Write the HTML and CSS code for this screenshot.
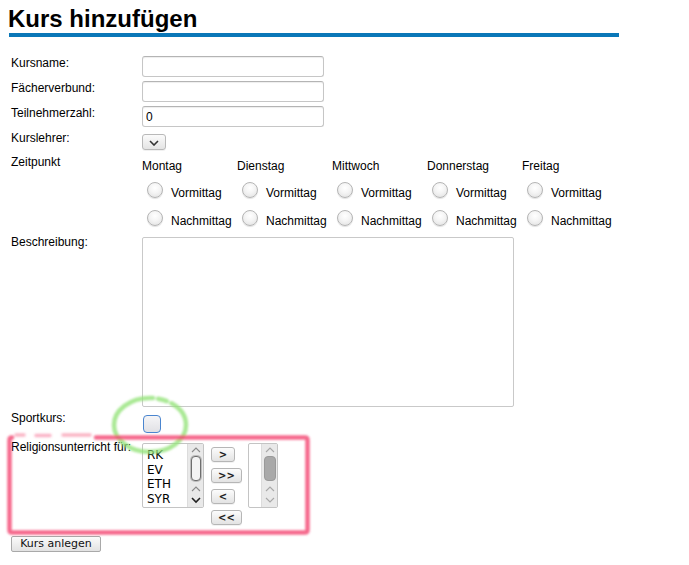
FILE: index.html
```html
<!DOCTYPE html>
<html lang="de">
<head>
<meta charset="utf-8">
<title>Kurs hinzufügen</title>
<link rel="stylesheet" href="styles.css">
</head>
<body>
<div class="page">
  <h1 class="title">Kurs hinzufügen</h1>
  <div class="form">
    <div class="row r-text"><label class="lbl">Kursname:</label><input class="txt" type="text"></div>
    <div class="row r-text"><label class="lbl">Fächerverbund:</label><input class="txt" type="text"></div>
    <div class="row r-text"><label class="lbl">Teilnehmerzahl:</label><input class="txt" type="text" value="0"></div>
    <div class="row r-sel"><label class="lbl">Kurslehrer:</label>
      <span class="sel"><svg width="10" height="6" viewBox="0 0 10 6"><polyline points="1,1 5,5 9,1" fill="none" stroke="#333" stroke-width="1.6"/></svg></span>
    </div>
    <div class="row r-time"><label class="lbl">Zeitpunkt</label>
      <div class="days">
        <span class="day">Montag</span><span class="day">Dienstag</span><span class="day">Mittwoch</span><span class="day">Donnerstag</span><span class="day">Freitag</span>
        <label class="opt"><input class="radio" type="radio" name="mo"><span class="opt-t">Vormittag</span></label>
        <label class="opt"><input class="radio" type="radio" name="di"><span class="opt-t">Vormittag</span></label>
        <label class="opt"><input class="radio" type="radio" name="mi"><span class="opt-t">Vormittag</span></label>
        <label class="opt"><input class="radio" type="radio" name="do"><span class="opt-t">Vormittag</span></label>
        <label class="opt"><input class="radio" type="radio" name="fr"><span class="opt-t">Vormittag</span></label>
        <label class="opt"><input class="radio" type="radio" name="mo"><span class="opt-t">Nachmittag</span></label>
        <label class="opt"><input class="radio" type="radio" name="di"><span class="opt-t">Nachmittag</span></label>
        <label class="opt"><input class="radio" type="radio" name="mi"><span class="opt-t">Nachmittag</span></label>
        <label class="opt"><input class="radio" type="radio" name="do"><span class="opt-t">Nachmittag</span></label>
        <label class="opt"><input class="radio" type="radio" name="fr"><span class="opt-t">Nachmittag</span></label>
      </div>
    </div>
    <div class="row r-desc"><label class="lbl">Beschreibung:</label><textarea class="area"></textarea></div>
    <div class="row r-sport"><label class="lbl">Sportkurs:</label><input class="check" type="checkbox"></div>
    <div class="row r-rel"><label class="lbl">Religionsunterricht für:</label>
      <div class="rel">
        <div class="list list-a">
          <div class="items"><div>RK</div><div>EV</div><div>ETH</div><div>SYR</div></div>
          <div class="sb">
            <svg class="sb-top" width="14" height="12" viewBox="0 0 14 12"><polyline points="3,8 7,4 11,8" fill="none" stroke="#8a8a8a" stroke-width="1.1"/></svg>
            <div class="thumb thumb-a"></div>
            <svg class="sb-bot" width="14" height="26" viewBox="0 0 14 26"><polyline points="3,10 7,6 11,10" fill="none" stroke="#8a8a8a" stroke-width="1.1"/><polyline points="3,17 7,21 11,17" fill="none" stroke="#222" stroke-width="1.6"/></svg>
          </div>
        </div>
        <div class="moves">
          <button class="mv">&gt;</button>
          <button class="mv wide">&gt;&gt;</button>
          <button class="mv">&lt;</button>
          <button class="mv wide">&lt;&lt;</button>
        </div>
        <div class="list list-b">
          <div class="items"></div>
          <div class="sb">
            <svg class="sb-top" width="14" height="12" viewBox="0 0 14 12"><polyline points="3,8 7,4 11,8" fill="none" stroke="#a8a8a8" stroke-width="1.1"/></svg>
            <div class="thumb thumb-b"></div>
            <svg class="sb-bot" width="14" height="26" viewBox="0 0 14 26"><polyline points="3,10 7,6 11,10" fill="none" stroke="#a8a8a8" stroke-width="1.1"/><polyline points="3,17 7,21 11,17" fill="none" stroke="#a8a8a8" stroke-width="1.1"/></svg>
          </div>
        </div>
      </div>
    </div>
    <button class="submit">Kurs anlegen</button>
  </div>
  <svg class="notes" width="689" height="565" viewBox="0 0 689 565">
    <defs>
      <filter id="soft" x="-10%" y="-10%" width="120%" height="120%"><feGaussianBlur stdDeviation="0.9"/></filter>
    </defs>
    <g filter="url(#soft)" fill="none" stroke-linecap="round">
      <ellipse cx="150" cy="425" rx="36" ry="27" stroke="#95e47a" stroke-opacity="0.8" stroke-width="4.5" stroke-dasharray="152 5 9 5 200"/>
      <path d="M 96 437.5 H 305 Q 307.5 437.5 307.5 440 V 530 Q 307.5 532.5 305 532.5 H 12 Q 9.5 532.5 9.5 530 V 440 Q 9.5 437.5 12 437.5" stroke="#f3446f" stroke-opacity="0.8" stroke-width="4.5"/>
      <path d="M 16 435 H 24 M 36 435.5 H 50 M 63 435 H 90" stroke="#f3446f" stroke-opacity="0.4" stroke-width="3.5"/>
    </g>
  </svg>
</div>
</body>
</html>
```
FILE: styles.css
```css
* { box-sizing: border-box; }
body {
  margin: 0;
  background: #fff;
  color: #000;
  font-family: "Liberation Sans", Arial, sans-serif;
  font-size: 12px;
}
.page {
  position: relative;
  width: 689px;
  height: 565px;
  overflow: hidden;
}
.title {
  margin: 5px 0 0 9px;
  width: 610px;
  font-size: 24px;
  line-height: 28px;
  font-weight: bold;
  text-indent: -1px;
  border-bottom: 4px solid #0a77b8;
}
.form {
  padding: 19px 0 0 11px;
}
.row {
  display: grid;
  grid-template-columns: 131px auto;
  align-items: start;
  justify-items: start;
}
.lbl {
  line-height: 14px;
  white-space: nowrap;
}
.r-text { height: 25px; }
.txt {
  width: 182px;
  height: 21px;
  margin: 0;
  padding: 0 3px;
  border: 1px solid #c6c6c6;
  border-top-color: #b4b4b4;
  border-radius: 3px;
  box-shadow: inset 0 1px 1px rgba(0,0,0,0.07);
  font-family: "Liberation Sans", Arial, sans-serif;
  font-size: 12px;
  color: #000;
  background: #fff;
  outline: none;
}
.r-sel { height: 24px; }
.sel {
  margin-top: 3px;
  width: 24px;
  height: 16px;
  border: 1px solid #b9b9b9;
  border-radius: 3px;
  background: linear-gradient(#fbfbfb, #e4e4e4);
  display: flex;
  align-items: center;
  justify-content: center;
  box-shadow: 0 1px 0 rgba(0,0,0,0.06);
}
.sel svg { margin-top: 1px; }
.r-time { height: 77px; }
.days {
  padding-top: 4px;
  display: grid;
  grid-template-columns: repeat(5, 95px);
  grid-template-rows: 17px 28px 28px;
}
.day { line-height: 14px; white-space: nowrap; }
.opt {
  display: flex;
  align-items: flex-start;
  white-space: nowrap;
}
.radio {
  appearance: none;
  -webkit-appearance: none;
  margin: 6px 0 0 5px;
  width: 16px;
  height: 16px;
  border: 1px solid #b5b5b5;
  border-radius: 50%;
  background: radial-gradient(circle at 50% 35%, #ffffff 0%, #f4f4f4 45%, #dedede 100%);
  box-shadow: 0 1px 1px rgba(0,0,0,0.12);
  flex: none;
}
.opt-t {
  padding-top: 10px;
  margin-left: 8px;
  line-height: 14px;
}
.r-desc { margin-top: 3px; }
.area {
  margin: 2px 0 0 0;
  width: 372px;
  height: 170px;
  border: 1px solid #c9c9c9;
  border-radius: 2px;
  resize: none;
  background: #fff;
  outline: none;
}
.r-sport { margin-top: 4px; }
.check {
  appearance: none;
  -webkit-appearance: none;
  margin: 4px 0 0 1px;
  width: 18px;
  height: 18px;
  border: 1.5px solid #4a85cf;
  border-radius: 4px;
  background: linear-gradient(#f5f5f7, #e1e1e5);
}
.r-rel { margin-top: 7px; }
.rel {
  display: flex;
  align-items: flex-start;
  margin-top: 3px;
}
.list {
  display: flex;
  height: 65px;
  border: 1px solid #c4c4c4;
  border-radius: 2px;
  background: #fff;
}
.list-a { width: 62px; }
.list-b { width: 30px; margin-left: 6px; }
.items {
  flex: 1;
  padding: 4px 0 0 4px;
  font-family: "DejaVu Sans", sans-serif;
  font-size: 12px;
  line-height: 14.6px;
  overflow: hidden;
}
.sb {
  width: 16px;
  display: flex;
  flex-direction: column;
  align-items: center;
  background: #e9e9e9;
  border-left: 1px solid #dcdcdc;
}
.sb svg { display: block; flex: none; }
.thumb {
  width: 12px;
  height: 25px;
  border-radius: 4px;
  flex: none;
}
.thumb-a {
  background: #f3f3f3;
  border: 1px solid #6e6e6e;
  box-shadow: 0 0 0 1px #bdbdbd;
  width: 10px;
}
.thumb-b {
  background: #a9a9a9;
  border: 1px solid #9a9a9a;
}
.moves {
  display: flex;
  flex-direction: column;
  align-items: flex-start;
  gap: 6px;
  margin-left: 7px;
  padding-top: 4px;
}
.mv {
  width: 24px;
  height: 15px;
  margin: 0;
  padding: 0;
  border: 1px solid #b6b6b6;
  border-radius: 3px;
  background: linear-gradient(#fcfcfc, #e3e3e3);
  font-family: "DejaVu Sans", sans-serif;
  font-size: 10px;
  font-weight: bold;
  line-height: 13px;
  color: #222;
  box-shadow: 0 1px 0 rgba(0,0,0,0.05);
}
.mv.wide { width: 31px; }
.submit {
  display: block;
  margin: 11px 0 0 0;
  width: 90px;
  height: 16px;
  padding: 0;
  border: 1px solid #a9a9a9;
  border-radius: 2px;
  background: linear-gradient(#fbfbfb, #e2e2e2);
  font-family: "DejaVu Sans", sans-serif;
  font-size: 11px;
  line-height: 14px;
  color: #111;
}
.notes {
  position: absolute;
  left: 0;
  top: 0;
  pointer-events: none;
}
```
